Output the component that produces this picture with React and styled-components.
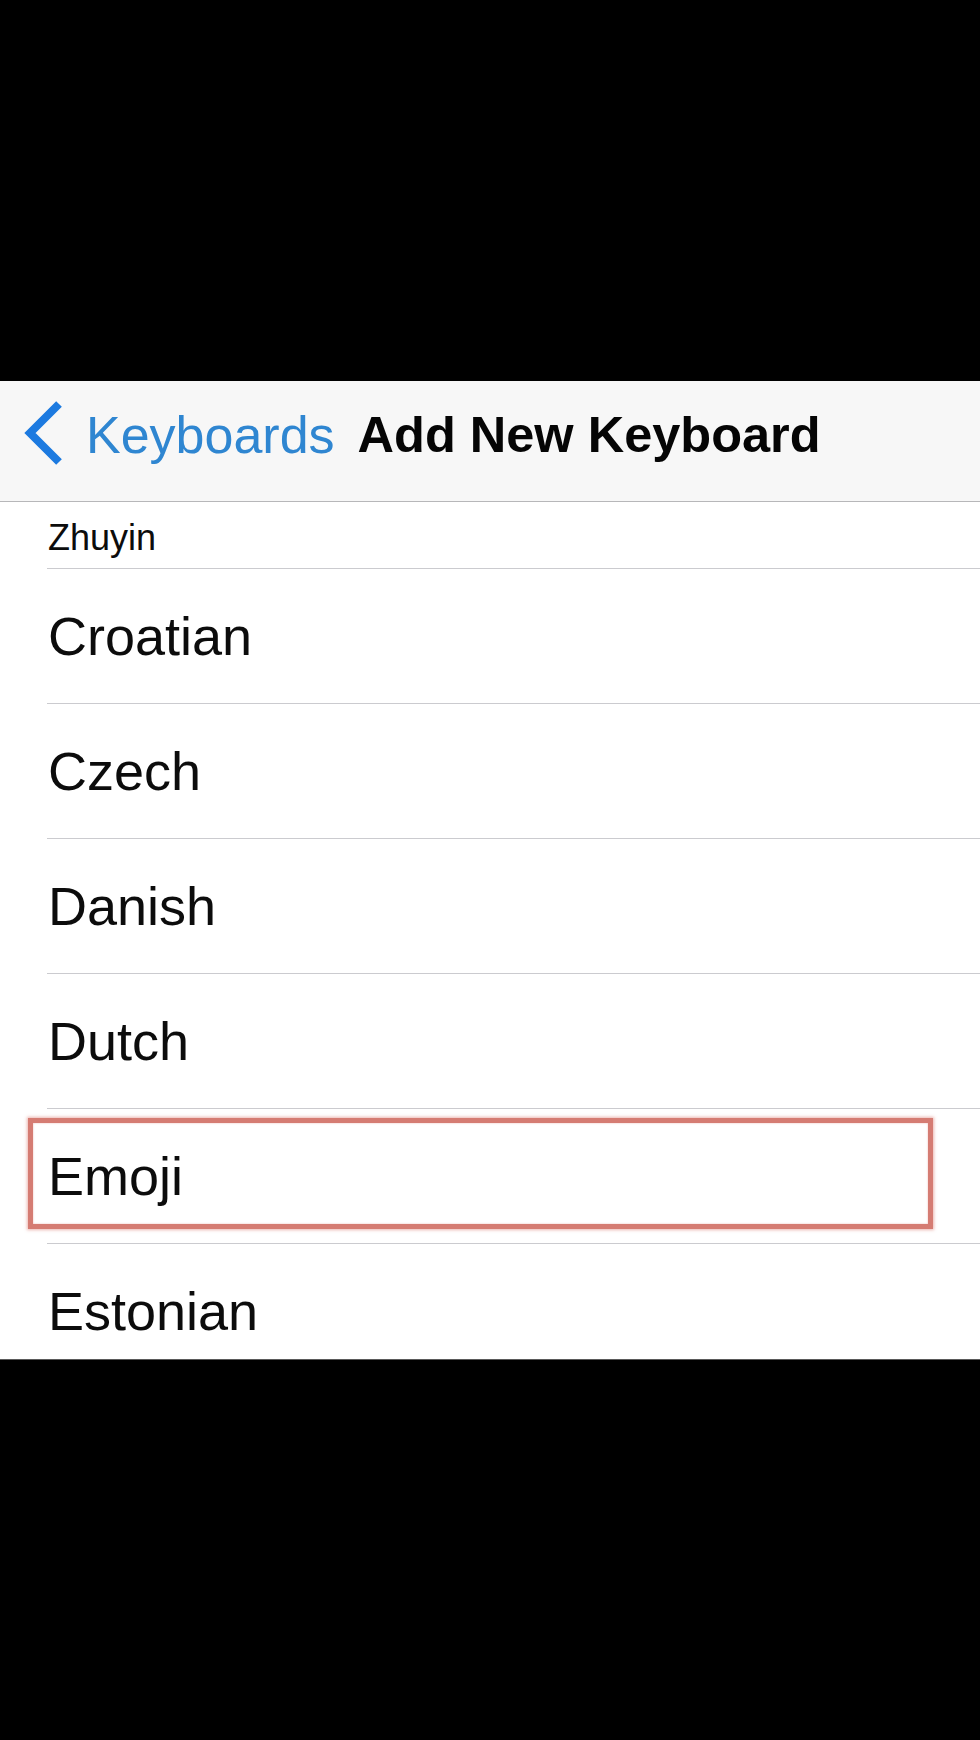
import React from 'react';
import styled, { createGlobalStyle } from 'styled-components';

const GlobalStyle = createGlobalStyle`
  html, body {
    margin: 0;
    padding: 0;
    background: #000;
  }
  body {
    font-family: 'Liberation Sans', Arial, Helvetica, sans-serif;
    -webkit-font-smoothing: antialiased;
  }
`;

const Page = styled.div`
  width: 980px;
  height: 1740px;
  background: #000;
  padding-top: 381px;
  box-sizing: border-box;
  overflow: hidden;
`;

const Screen = styled.div`
  width: 980px;
  height: 979px;
  background: #fff;
  overflow: hidden;
  border-bottom: 1px solid #5a5a5a;
  box-sizing: border-box;
`;

const NavBar = styled.header`
  height: 121px;
  box-sizing: border-box;
  background: #f7f7f7;
  border-bottom: 1px solid #b7b7b9;
  display: flex;
  align-items: center;
  padding: 0 0 12px 22px;
`;

const BackButton = styled.a`
  display: flex;
  align-items: center;
  gap: 22px;
  color: #2f86d1;
  text-decoration: none;
  font-size: 52px;
  line-height: 1;
`;

const Chevron = styled.svg`
  width: 42px;
  height: 66px;
  margin-top: -4px;
`;

const Title = styled.h1`
  margin: 0 0 0 23px;
  font-size: 50.5px;
  font-weight: 700;
  line-height: 1;
  color: #050505;
`;

const List = styled.ul`
  list-style: none;
  margin: 0;
  padding: 0;
`;

const Row = styled.li`
  position: relative;
  padding-left: 47px;
`;

const RowInner = styled.div`
  height: ${(p) => (p.compact ? '60px' : '134px')};
  padding-top: ${(p) => (p.compact ? '6px' : '0')};
  border-bottom: 1px solid #cbcbcf;
  display: flex;
  align-items: center;
  padding-left: 1px;
  font-size: ${(p) => (p.compact ? '36px' : '54px')};
  line-height: 1;
  color: #0c0c0c;
`;

const Highlight = styled.div`
  position: absolute;
  left: 28px;
  top: 9px;
  width: 905px;
  height: 111px;
  box-sizing: border-box;
  border: 5px solid #d57c73;
  box-shadow: 0 0 3px 1px rgba(226, 150, 142, 0.7),
    inset 0 0 2px rgba(226, 150, 142, 0.7);
  pointer-events: none;
`;

const languages = ['Croatian', 'Czech', 'Danish', 'Dutch', 'Emoji', 'Estonian'];

const App = () => {
  return (
    <>
      <GlobalStyle />
      <Page>
        <Screen>
          <NavBar>
            <BackButton href="#">
              <Chevron viewBox="0 0 42 66">
                <polyline
                  points="37,4 8,33 37,62"
                  fill="none"
                  stroke="#1c7ae0"
                  strokeWidth="8"
                  strokeLinecap="butt"
                  strokeLinejoin="miter"
                />
              </Chevron>
              Keyboards
            </BackButton>
            <Title>Add New Keyboard</Title>
          </NavBar>
          <List>
            <Row>
              <RowInner compact>Zhuyin</RowInner>
            </Row>
            {languages.map((name) => (
              <Row key={name}>
                <RowInner>{name}</RowInner>
                {name === 'Emoji' && <Highlight />}
              </Row>
            ))}
          </List>
        </Screen>
      </Page>
    </>
  );
};

export default App;
